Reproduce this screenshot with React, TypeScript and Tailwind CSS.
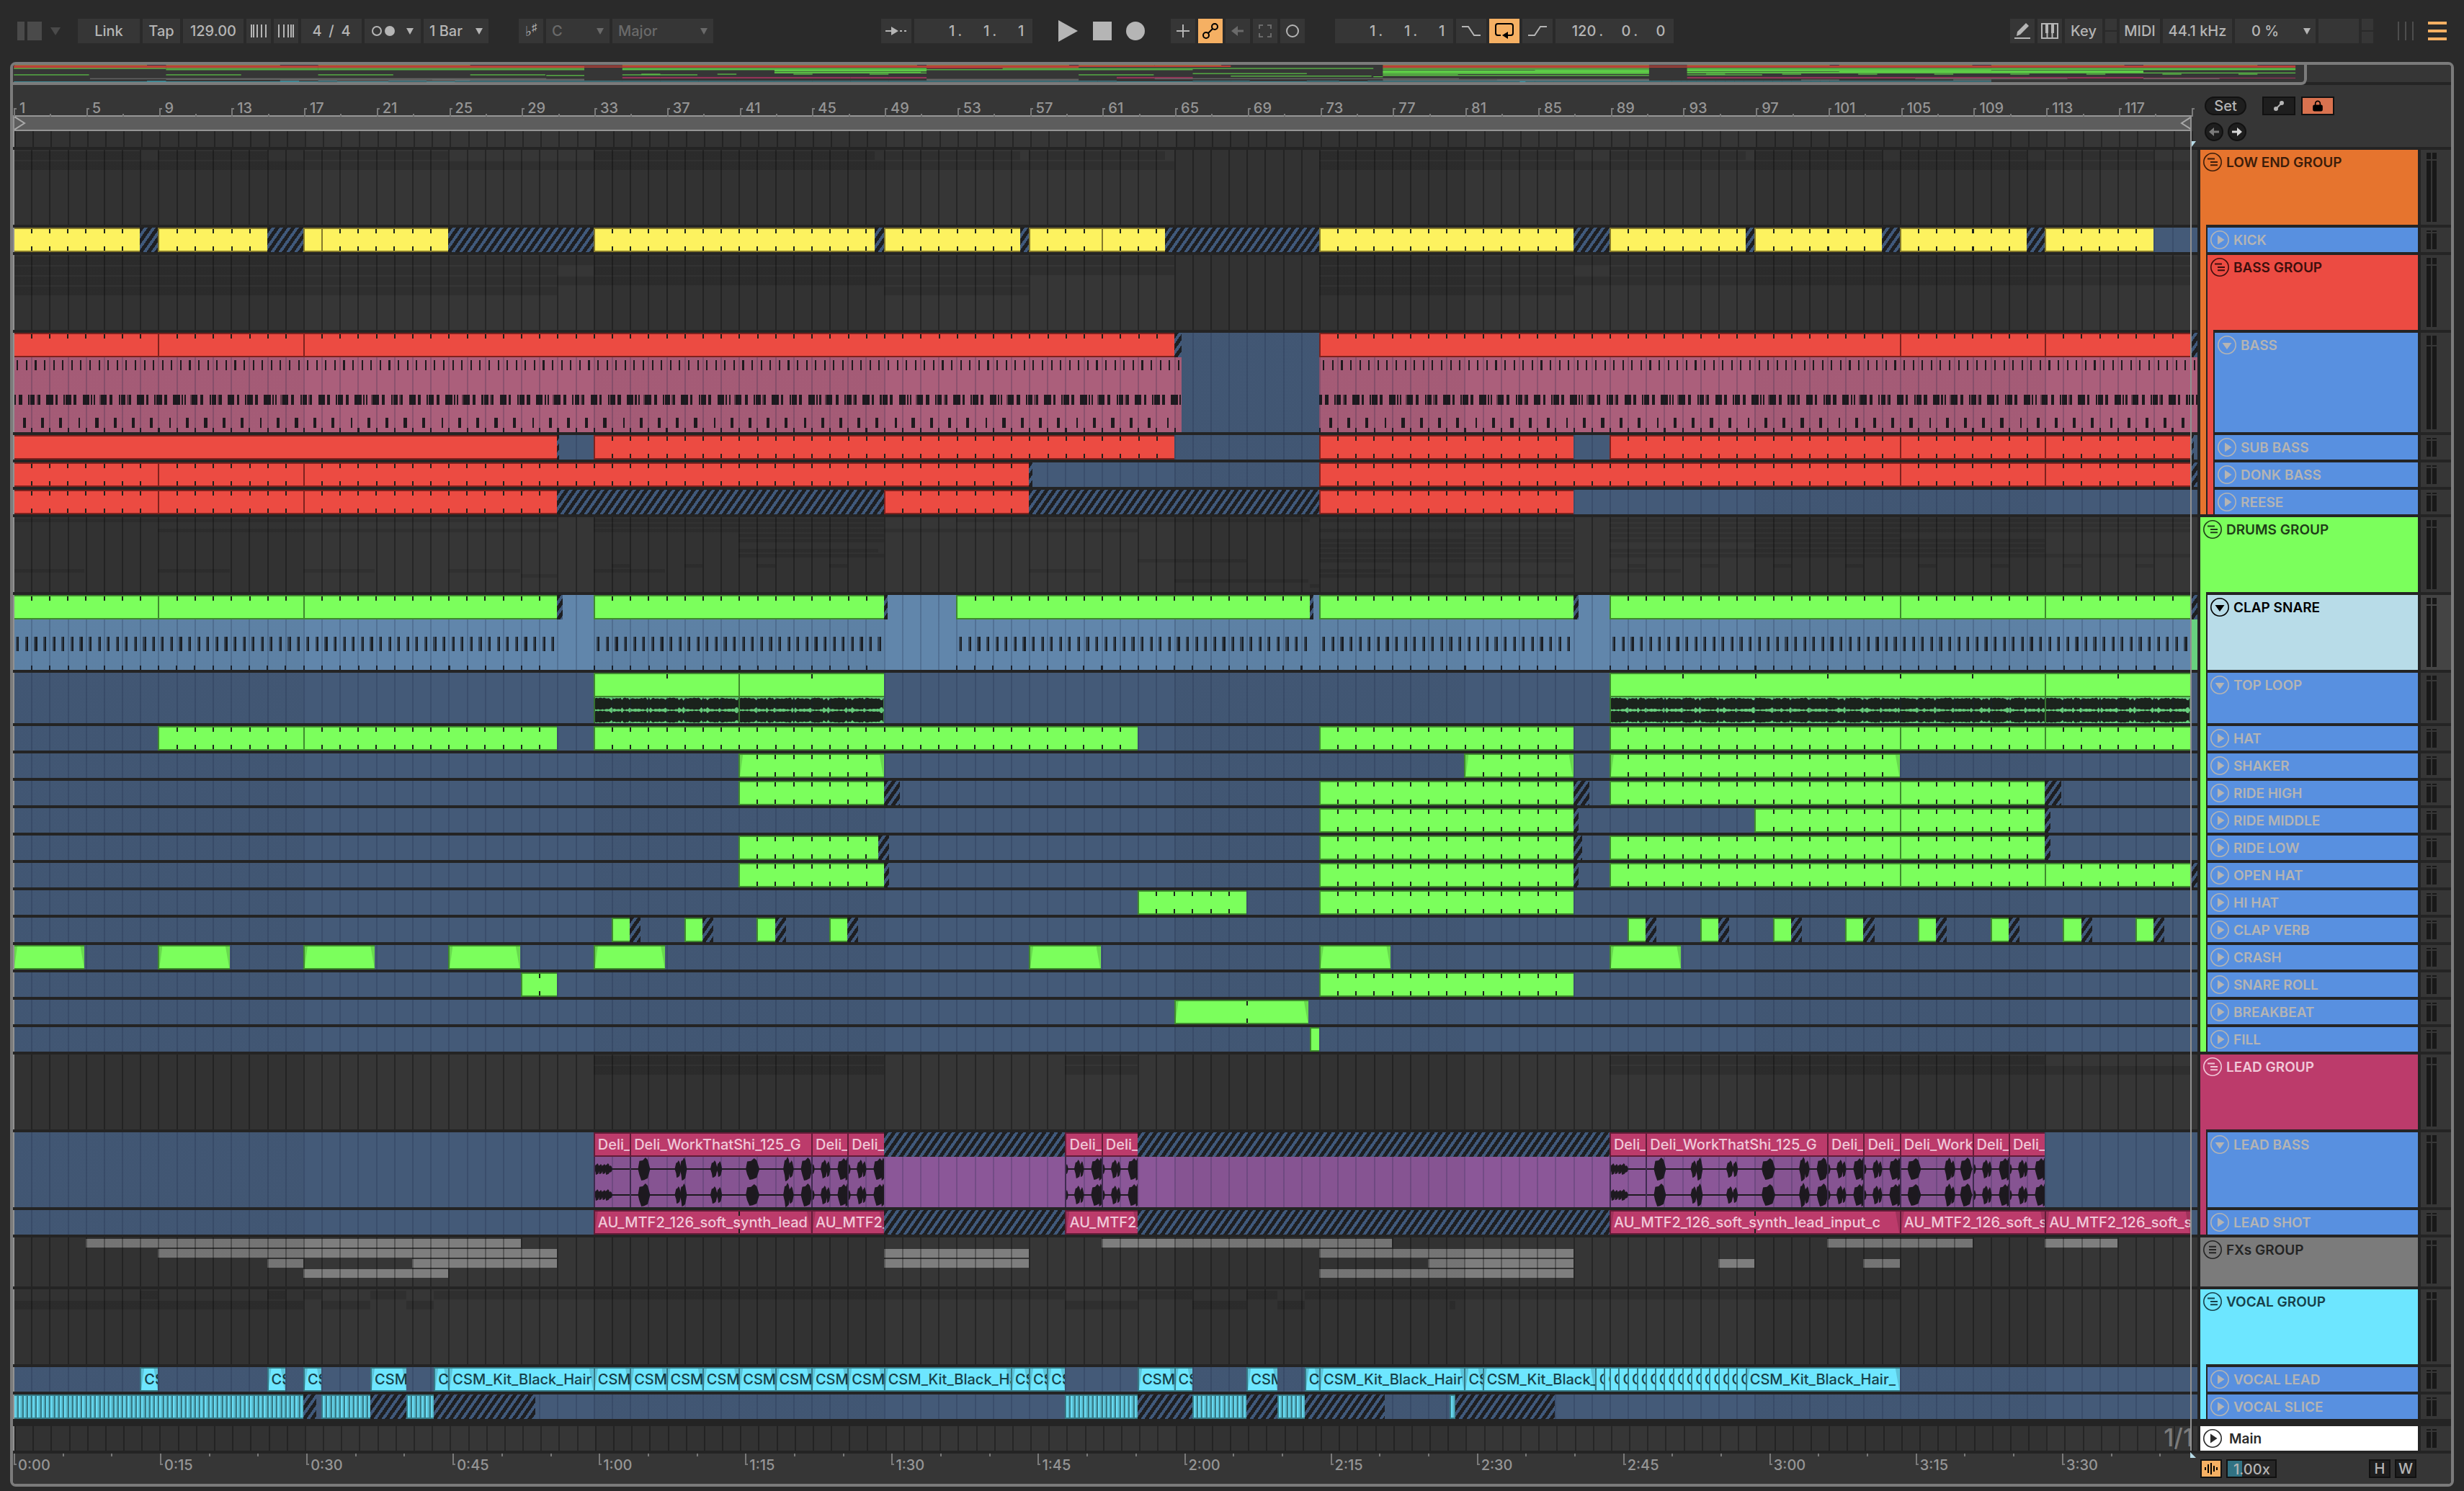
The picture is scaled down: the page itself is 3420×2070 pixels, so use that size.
import type { ReactNode } from 'react';
import { clsx } from 'clsx';
import { Lock } from 'lucide-react';

// Bars that fit into the width of the arrangement
const VISIBLE_BARS = 120.33;
const pct = (bars: number) => `${(bars / VISIBLE_BARS) * 100}%`;
const span = (start: number, end: number) => ({ left: pct(start - 1), width: pct(end - start) });

type Range = [number, number];
type Palette = 'yellow' | 'red' | 'green' | 'pink' | 'cyan';

interface Clip {
  range: Range;
  label?: string;
  tick?: number;
}

interface Track {
  name: string;
  kind: 'group' | 'fx' | 'track' | 'open';
  size: string;
  tile: string;
  strips?: string[];
  lane?: string;
  palette?: Palette;
  clips?: Clip[];
  hatch?: Range[];
  fades?: boolean;
  body?: ReactNode;
  mini?: { pitch: number; height: number; fill: string; rows: Range[][] };
  selected?: boolean;
}

const PALETTE: Record<Palette, { fill: string; edge: string; border: string; text: string; hex: string }> = {
  yellow: { fill: 'bg-[#fdf25f]', edge: 'bg-[#85792c]', border: 'border-[#85792c]', text: 'text-black', hex: '#8b7d38' },
  red: { fill: 'bg-[#ec4b42]', edge: 'bg-[#7f221e]', border: 'border-[#7f221e]', text: 'text-black', hex: '#c0413a' },
  green: { fill: 'bg-[#7bff5c]', edge: 'bg-[#3f8a2e]', border: 'border-[#3f8a2e]', text: 'text-black', hex: '#5fce48' },
  pink: { fill: 'bg-[#bc3b6b]', edge: 'bg-[#631c38]', border: 'border-[#631c38]', text: 'text-[#f0c8d8]', hex: '#98345a' },
  cyan: { fill: 'bg-[#6de6ff]', edge: 'bg-[#367985]', border: 'border-[#367985]', text: 'text-[#17414a]', hex: '#4397a6' },
};

const DARK_GRID =
  'bg-[repeating-linear-gradient(90deg,rgba(0,0,0,0.3)_0_2px,transparent_2px_0.831048%),repeating-linear-gradient(90deg,rgba(0,0,0,0.08)_0_13.29677%,transparent_13.29677%_26.59354%)]';
const SOFT_GRID =
  'bg-[repeating-linear-gradient(90deg,rgba(20,30,60,0.2)_0_2px,transparent_2px_0.831048%),repeating-linear-gradient(90deg,rgba(0,0,0,0.04)_0_13.29677%,transparent_13.29677%_26.59354%)]';
const HATCH = 'bg-[repeating-linear-gradient(125deg,#1e1f22_0_5px,#40597b_5px_9px)]';
const BLUE_LANE = 'bg-[#445a78]';

const SMALL = 'h-[38px]';
const TALL = 'h-[108px]';

const ORANGE = 'bg-[#e6742e]';
const RED = 'bg-[#ec4b42]';
const GREEN = 'bg-[#7bff5c]';
const PINK = 'bg-[#bc3b6b]';
const CYAN = 'bg-[#6de6ff]';

const each = (ranges: Range[], tick?: number, label?: string): Clip[] =>
  ranges.map((range) => ({
    range,
    tick,
    // Only as many letters as the clip has room for
    label: label?.slice(0, Math.floor((range[1] - range[0]) * 2.2 + 0.6)),
  }));

const kick: Range[] = [
  [1, 8], [9, 15], [17, 18], [18, 25], [33, 48.5], [49, 56.5], [57, 61], [61, 64.5],
  [73, 87], [89, 96.5], [97, 104], [105, 112], [113, 119],
];
const bass: Range[] = [[1, 9], [9, 17], [17, 65], [73, 105], [105, 113], [113, 121]];
const subBass: Range[] = [[33, 65], [73, 87], [89, 105], [105, 113], [113, 121]];
const donk: Range[] = [[1, 9], [9, 17], [17, 57], [73, 105], [105, 113], [113, 121]];
const reese: Range[] = [[1, 9], [9, 17], [17, 31], [49, 57], [73, 87]];
const clap: Range[] = [
  [1, 9], [9, 17], [17, 31], [33, 49], [53, 72.5], [73, 87], [89, 105], [105, 113], [113, 121],
];
const topLoop: Range[] = [[33, 41], [41, 49], [89, 113], [113, 121]];
const hat: Range[] = [[9, 17], [17, 31], [33, 63], [73, 87], [89, 105], [105, 113], [113, 121]];
const shaker: Range[] = [[41, 49], [81, 87], [89, 105]];
const rideHigh: Range[] = [[41, 49], [73, 87], [89, 105], [105, 113]];
const rideMiddle: Range[] = [[73, 87], [97, 105], [105, 113]];
const rideLow: Range[] = [[41, 48.7], [73, 87], [89, 105], [105, 113]];
const openHat: Range[] = [[41, 49], [73, 87], [89, 105], [105, 113], [113, 121]];
const hiHat: Range[] = [[63, 69], [73, 87]];
const clapVerb = [34, 38, 42, 46, 90, 94, 98, 102, 106, 110, 114, 118].map((b): Range => [b, b + 1]);
const crash = [1, 9, 17, 25, 33, 57, 73, 89].map((b): Range => [b, b + 3.95]);
const snareRoll: Range[] = [[29, 31], [73, 87]];
const breakbeat: Range[] = [[65, 72.4]];
const fill: Range[] = [[72.5, 73]];
const leadBass: Range[] = [
  [33, 35], [35, 45], [45, 47], [47, 49], [59, 61], [61, 63],
  [89, 91], [91, 101], [101, 103], [103, 105], [105, 109], [109, 111], [111, 113],
];
const leadShot: Range[] = [[33, 45], [45, 49], [59, 63], [89, 105], [105, 113], [113, 121]];
const fxRows: Range[][] = [
  [[5, 29], [61, 77], [101, 109], [113, 117]],
  [[9, 31], [49, 57], [73, 87]],
  [[15, 17], [23, 31], [49, 57], [79, 87], [95, 97], [103, 105]],
  [[17, 25], [73, 87]],
];
const vocalLead: Range[] = [
  [8, 9], [15, 16], [17, 18], [20.7, 22.7], [24.2, 25], [25, 33],
  ...[33, 35, 37, 39, 41, 43, 45, 47].map((b): Range => [b, b + 2]),
  [49, 56], [56, 57], [57, 58], [58, 59], [63, 65], [65, 66], [69, 70.7], [72.2, 73],
  [73, 81], [81, 82], [82, 88.2], [88.2, 88.7], [88.7, 89],
  ...Array.from({ length: 15 }, (_, i): Range => [89 + i / 2, 89.5 + i / 2]),
  [96.5, 105],
];
const vocalSlice: Range[] = [
  [1, 17], [18, 20.7], [22.7, 24.2], [59, 63], [66, 69], [70.7, 72.2], [80.2, 80.5],
];

// Merge touching clips, for the shaded previews in the group lanes
function merge(ranges: Range[]): Range[] {
  const out: Range[] = [];
  ranges.forEach(([start, end]) => {
    const last = out[out.length - 1];
    if (last && last[1] === start) last[1] = end;
    else out.push([start, end]);
  });
  return out;
}

// Note positions of the five bar bass pattern, 24 units to the bar
const BASS_NOTES: [number, number, number?][] = [
  [-1, 6], [7, 2, 0.5], [9, 3], [20, 9], [32, 3], [43, 2], [46, 7], [56, 4], [68, 9],
  [79, 2], [83, 2], [90, 2, 0.5], [92, 8], [104, 4], [116, 2],
];

function BassNotes({ range: [start, end] }: { range: Range }) {
  const width = (end - start) * 24;
  const halves = Array.from({ length: Math.ceil((end - start) * 2) }, (_, i) => i * 12 + 5);
  const bars = Array.from({ length: Math.ceil(end - start) }, (_, i) => i * 24);
  const cycles = Array.from({ length: Math.ceil((end - start) / 5) + 1 }, (_, i) => i * 120 - 96);
  return (
    <div className="absolute inset-y-0 bg-[#ab5f7b]" style={span(start, end)}>
      <svg
        className="h-full w-full text-[#1e1a1e]"
        viewBox={`0 0 ${width} 104`}
        preserveAspectRatio="none"
        fill="currentColor"
        shapeRendering="crispEdges"
      >
        {halves.map((x) => (
          <rect key={x} x={x} y="4" width="2" height="14" />
        ))}
        {cycles.map((c) =>
          BASS_NOTES.map(([x, w, opacity]) => (
            <rect key={`${c}-${x}`} x={c + x} y="52" width={w} height="14" opacity={opacity ?? 1} />
          ))
        )}
        {bars.map((x, i) => (
          <g key={x}>
            <rect x={x + (i % 5 === 3 ? 15 : 13)} y="84" width={i % 5 === 3 ? 2 : 4} height="14" />
            <rect x={x} y="98" width="2" height="6" />
          </g>
        ))}
      </svg>
    </div>
  );
}

function ClapNotes({ range: [start, end] }: { range: Range }) {
  const halves = Array.from({ length: Math.floor((end - start) * 2) }, (_, i) => i * 12 + 5);
  const bars = Array.from({ length: Math.ceil(end - start) }, (_, i) => i * 24);
  return (
    <div className="absolute inset-y-0" style={span(start, end)}>
      <svg
        className="h-full w-full text-[#1b2026]"
        viewBox={`0 0 ${(end - start) * 24} 70`}
        preserveAspectRatio="none"
        fill="currentColor"
        shapeRendering="crispEdges"
      >
        {halves.map((x) => (
          <g key={x}>
            <rect x={x - 1} y="24" width="2" height="20" opacity="0.6" />
            <rect x={x + 1} y="24" width="2" height="20" />
          </g>
        ))}
        {bars.map((x) => (
          <rect key={x} x={x} y="64" width="2" height="6" />
        ))}
      </svg>
    </div>
  );
}

function LoopWave({ range: [start, end] }: { range: Range }) {
  const steps = Math.round((end - start) * 12);
  const channel = (mid: number) => {
    const top: string[] = [];
    const bottom: string[] = [];
    for (let i = 0; i <= steps; i++) {
      const dip = i % 12 === 11 || i % 19 === 18 ? 2.5 : 0;
      const h = 7.6 + Math.sin(i * 2.3) * 0.5 + Math.sin(i * 0.4) * 0.5 - dip;
      top.push(`${i * 2},${mid - h}`);
      bottom.unshift(`${i * 2},${mid + h}`);
    }
    return [...top, ...bottom].join(' ');
  };
  return (
    <div className="absolute inset-y-0 border-l-2 border-[#3f8a2e] bg-[#68d17e]" style={span(start, end)}>
      <svg
        className="h-full w-full"
        viewBox={`0 0 ${steps * 2} 36`}
        preserveAspectRatio="none"
        fill="#1b231d"
      >
        <polygon points={channel(9)} />
        <polygon points={channel(27)} />
      </svg>
    </div>
  );
}

// Vocal hits as [bar offset, width, height]
type Hit = [number, number, number];
const LONG_HITS: Hit[] = [[0.72, 15, 16], [2.6, 7, 12], [2.9, 8, 16], [4.6, 8, 12], [4.9, 6, 11], [6.75, 17, 15], [8.65, 8, 17], [8.88, 6, 12], [9.75, 14, 16]];
const SHORT_HITS: Hit[] = [[0.02, 3, 7], [0.65, 8, 13], [0.88, 5, 11], [1.72, 13, 15], [1.95, 6, 16]];
const MID_HITS: Hit[] = [[0.73, 17, 15], [2.65, 9, 16], [2.88, 6, 12], [3.65, 15, 16]];
const INTRO_HITS: Hit[] = [[0.1, 6, 8], [0.3, 6, 7], [0.5, 6, 7], [0.7, 7, 8], [0.85, 6, 5]];

function HitWave({ range: [start, end] }: { range: Range }) {
  const length = end - start;
  const intro = start === 33 || start === 89;
  const hits = intro ? INTRO_HITS : length > 8 ? LONG_HITS : length > 3 ? MID_HITS : SHORT_HITS;
  return (
    <div className="absolute inset-y-0 border-l-2 border-[#4b2f56]" style={span(start, end)}>
      <svg
        className="h-full w-full"
        viewBox={`0 0 ${length * 25} 70`}
        preserveAspectRatio="none"
        fill="#1e1a20"
      >
        {[17, 53].map((mid) => (
          <g key={mid}>
            <rect x="0" y={mid - 1} width={length * 25} height="2" />
            {hits.map(([at, w, h]) => {
              const x = at * 25;
              return (
                <polygon
                  key={at}
                  points={`${x - w / 2 - 1},${mid} ${x - w / 2 + 1},${mid - h * 0.7} ${x - w / 8},${mid - h * 0.75} ${x + w / 8},${mid - h} ${x + w / 3},${mid - h * 0.8} ${x + w / 2 + 1},${mid} ${x + w / 3},${mid + h * 0.8} ${x},${mid + h * 0.95} ${x - w / 4},${mid + h} ${x - w / 2 + 1},${mid + h * 0.5}`}
                />
              );
            })}
          </g>
        ))}
      </svg>
    </div>
  );
}

const drum = (name: string, ranges: Range[], extra: Partial<Track> = {}, tick?: number): Track => ({
  name,
  kind: 'track',
  size: SMALL,
  tile: 'bg-[#5890e0] text-[#b4b4b4]',
  strips: [GREEN],
  lane: BLUE_LANE,
  palette: 'green',
  clips: each(ranges, tick),
  ...extra,
});

const TRACKS: Track[] = [
  {
    name: 'LOW END GROUP', kind: 'group', size: TALL, tile: `${ORANGE} text-[#3c1d0a]`,
    mini: { pitch: 14, height: 12, fill: 'bg-black/12', rows: [merge(kick.map((r) => [...r] as Range)), [[1, 65], [73, 121]]] },
  },
  {
    ...drum('KICK', kick, {}, 1), strips: [ORANGE], palette: 'yellow',
    hatch: [[8, 9], [15, 17], [25, 33], [48.5, 49], [56.5, 57], [64.5, 73], [87, 89], [96.5, 97], [104, 105], [112, 113]],
  },
  {
    name: 'BASS GROUP', kind: 'group', size: TALL, tile: `${RED} text-[#3d0f0d]`, strips: [ORANGE],
    mini: { pitch: 14, height: 12, fill: 'bg-black/12', rows: [[[1, 65], [73, 121]], [[1, 31], [33, 65], [73, 87], [89, 121]], [[1, 57], [73, 121]], [[1, 31], [49, 57], [73, 87]]] },
  },
  {
    ...drum('BASS', bass, {}, 1), kind: 'open', size: 'h-[142px]', strips: [ORANGE, RED], palette: 'red',
    hatch: [[65, 65.4], [121, 122]],
    body: (
      <>
        <BassNotes range={[1, 65.4]} />
        <BassNotes range={[73, 122]} />
      </>
    ),
  },
  {
    ...drum('SUB BASS', []), strips: [ORANGE, RED], palette: 'red',
    clips: [{ range: [1, 31] }, ...each(subBass, 1)], hatch: [[31, 31.1], [121, 121.2]],
  },
  { ...drum('DONK BASS', donk, {}, 1), strips: [ORANGE, RED], palette: 'red', hatch: [[57, 57.2], [121, 122]] },
  { ...drum('REESE', reese, {}, 1), strips: [ORANGE, RED], palette: 'red', hatch: [[31, 49], [57, 73]] },
  {
    name: 'DRUMS GROUP', kind: 'group', size: TALL, tile: `${GREEN} text-[#1f3d18]`,
    mini: {
      pitch: 7, height: 5, fill: 'bg-black/10',
      rows: [clap, topLoop, hat, shaker, rideHigh, rideMiddle, rideLow, openHat, hiHat, clapVerb, crash, snareRoll, breakbeat, fill],
    },
  },
  {
    ...drum('CLAP SNARE', clap, {}, 1), kind: 'open', size: TALL, tile: 'bg-[#b8dce8] text-black',
    lane: 'bg-[#6186ab]', selected: true,
    hatch: [[31, 31.3], [49, 49.2], [72.5, 72.7], [87, 87.3], [121, 122]],
    body: (
      <>
        {[[1, 9], [9, 17], [17, 31], [33, 49], [53, 72.5], [73, 87], [89, 121]].map(([a, b]) => (
          <ClapNotes key={a} range={[a, b]} />
        ))}
        <div className="absolute inset-y-0 bg-[#68d17e]" style={span(121, 122)} />
      </>
    ),
  },
  {
    ...drum('TOP LOOP', topLoop, {}, 4), kind: 'open', size: 'h-[74px]',
    body: topLoop.map((range) => <LoopWave key={range[0]} range={range} />),
  },
  drum('HAT', hat, {}, 1),
  drum('SHAKER', shaker, { fades: true }, 1),
  drum('RIDE HIGH', rideHigh, { hatch: [[49, 49.9], [87, 87.9], [113, 113.9]] }, 1),
  drum('RIDE MIDDLE', rideMiddle, { hatch: [[87, 87.3], [113, 113.3]] }, 1),
  drum('RIDE LOW', rideLow, { hatch: [[48.7, 49.3], [87, 87.5], [113, 113.3]] }, 1),
  drum('OPEN HAT', openHat, { hatch: [[49, 49.3], [87, 87.3], [121, 122]] }, 1),
  drum('HI HAT', hiHat, {}, 1),
  drum('CLAP VERB', clapVerb, { hatch: clapVerb.map(([, b]): Range => [b, b + 0.6]) }),
  drum('CRASH', crash, { fades: true }),
  drum('SNARE ROLL', snareRoll, {}, 1),
  drum('BREAKBEAT', breakbeat, { fades: true }, 4),
  drum('FILL', fill),
  {
    name: 'LEAD GROUP', kind: 'group', size: TALL, tile: `${PINK} text-[#f0c8d8]`,
    mini: { pitch: 14, height: 12, fill: 'bg-black/12', rows: [[[33, 49], [59, 63], [89, 113]], [[33, 49], [59, 63], [89, 121]]] },
  },
  {
    ...drum('LEAD BASS', []), kind: 'open', size: TALL, strips: [PINK], palette: 'pink',
    clips: each(leadBass, undefined, 'Deli_WorkThatShi_125_G'), hatch: [[49, 59], [63, 89]],
    body: (
      <>
        <div className="absolute inset-y-0 bg-[#8b5798]" style={span(33, 113)} />
        {leadBass.map((range) => (
          <HitWave key={range[0]} range={range} />
        ))}
      </>
    ),
  },
  {
    ...drum('LEAD SHOT', []), strips: [PINK], palette: 'pink', fades: true,
    clips: each(leadShot, 8, 'AU_MTF2_126_soft_synth_lead_input_c'), hatch: [[49, 59], [63, 89]],
  },
  {
    name: 'FXs GROUP', kind: 'fx', size: 'h-[72px]', tile: 'bg-[#7b7b7b] text-[#242424]',
    mini: { pitch: 14, height: 12, fill: 'bg-[#7e7e7e]', rows: fxRows },
  },
  {
    name: 'VOCAL GROUP', kind: 'group', size: TALL, tile: `${CYAN} text-[#17414a]`,
    mini: { pitch: 14, height: 12, fill: 'bg-black/12', rows: [merge(vocalLead.map((r) => [...r] as Range)), vocalSlice] },
  },
  {
    ...drum('VOCAL LEAD', []), strips: [CYAN], palette: 'cyan', fades: true,
    clips: each(vocalLead, undefined, 'CSM_Kit_Black_Hair_'),
  },
  {
    ...drum('VOCAL SLICE', []), strips: [CYAN], palette: 'cyan', clips: each(vocalSlice),
    hatch: [[17, 17.7], [20.7, 22.7], [24.2, 29.8], [63, 66], [69, 70.7], [72.2, 76.6], [80.5, 86]],
  },
];

function Triangle({ className }: { className?: string }) {
  return (
    <svg className={clsx('pointer-events-none h-[10px] w-[10px]', className)} viewBox="0 0 10 10" fill="currentColor">
      <path d="M0 1h10L5 10z" />
    </svg>
  );
}

function TrackIcon({ kind }: { kind: Track['kind'] }) {
  return (
    <svg className="h-[26px] w-[26px] shrink-0" viewBox="0 0 26 26" fill="none" stroke="currentColor">
      <circle cx="13" cy="13" r="12.2" strokeWidth="1.6" />
      {kind === 'group' && <path d="M6 8.5h10M10 13h10M10 17.2h10" strokeWidth="2" />}
      {kind === 'fx' && <path d="M8 8.8h10M8 13h10M8 17.2h10" strokeWidth="2" />}
      {kind === 'track' && <path d="M10 6.5v13l9.5-6.5z" fill="currentColor" stroke="none" />}
      {kind === 'open' && <path d="M6.5 10h13L13 19z" fill="currentColor" stroke="none" />}
    </svg>
  );
}

function Meter({ selected }: { selected?: boolean }) {
  return (
    <div className={clsx('ml-1 flex w-[42px] gap-0.5 py-1 pl-2', selected ? 'bg-[#444444]' : 'bg-[#363636]')}>
      {[0, 1].map((side) => (
        <div key={side} className="grid w-1.5 grid-rows-[1fr_9fr] gap-0.5">
          <div className="bg-[#181818]" />
          <div className="bg-[#181818]" />
        </div>
      ))}
    </div>
  );
}

function Ticks({ length, every, className }: { length: number; every: number; className: string }) {
  if (length <= every) return null;
  const step = (every / (length - every)) * 100;
  return (
    <div
      className={clsx('absolute right-0 h-1.5', className)}
      style={{
        left: `${(every / length) * 100}%`,
        backgroundImage: `repeating-linear-gradient(90deg, #1c221c 0 2px, transparent 2px ${step}%)`,
      }}
    />
  );
}

function ClipView({ clip, track }: { clip: Clip; track: Track }) {
  const color = PALETTE[track.palette ?? 'green'];
  const length = clip.range[1] - clip.range[0];
  const sliced = track.name === 'VOCAL SLICE';
  return (
    <div
      className={clsx('absolute inset-y-0 overflow-hidden border-y-2', color.fill, color.border)}
      style={span(...clip.range)}
    >
      {sliced && (
        <div
          className="absolute inset-0"
          style={{
            backgroundImage: `repeating-linear-gradient(90deg, #367985 0 2px, #6de6ff 2px, #4faabb ${25 / length}%)`,
          }}
        />
      )}
      {track.fades && length > 0.6 && (
        <>
          <div className="absolute inset-y-0 left-0 w-1.5 bg-black/15 [clip-path:polygon(0_0,100%_0,30%_100%,0_100%)]" />
          <div className="absolute inset-y-0 right-0 w-1.5 bg-black/15 [clip-path:polygon(0_0,100%_0,100%_100%,90%_100%)]" />
        </>
      )}
      {clip.tick && <Ticks length={length} every={clip.tick} className="top-0" />}
      {clip.tick && track.kind === 'track' && <Ticks length={length} every={clip.tick} className="bottom-0" />}
      {clip.label && (
        <span className={clsx('block pl-1.5 text-xl leading-[30px] font-medium whitespace-nowrap', color.text)}>
          {clip.label}
        </span>
      )}
      {clip.range[0] > 1 && <div className={clsx('absolute inset-y-0 left-0 w-0.5', color.edge)} />}
    </div>
  );
}

function Lane({ track }: { track: Track }) {
  const { mini } = track;
  return (
    <div className={clsx('relative flex-1 overflow-hidden border-l-2 border-[#919191]', track.lane ?? 'bg-[#363636]')}>
      <div className="absolute inset-y-0 right-0.5 -left-0.5">
        {track.body && <div className="absolute inset-x-0 top-[34px] bottom-0">{track.body}</div>}
        {mini?.rows.map((row, i) =>
          row.map(([start, end]) => (
            <div
              key={`${i}-${start}`}
              className={clsx('absolute', mini.fill)}
              style={{ ...span(start, end), top: 2 + i * mini.pitch, height: mini.height }}
            />
          ))
        )}
        <div className={clsx('absolute inset-0', track.lane ? SOFT_GRID : DARK_GRID)} />
        <div className="absolute inset-x-0 top-0 h-[34px]">
          {track.hatch?.map(([start, end]) => (
            <div key={start} className={clsx('absolute inset-y-0', HATCH)} style={span(start, end)} />
          ))}
          {track.clips?.map((clip) => (
            <ClipView key={clip.range[0]} clip={clip} track={track} />
          ))}
        </div>
      </div>
    </div>
  );
}

function TrackRow({ track }: { track: Track }) {
  return (
    <div className={clsx('flex', track.size)}>
      <div className="flex flex-1 pt-1">
        <Lane track={track} />
      </div>
      <div className="ml-1 flex w-[302px]">
        {track.strips?.map((strip) => (
          <div key={strip} className={clsx('mr-0.5 w-2', strip)} />
        ))}
        <div className="flex flex-1 pt-1">
          <div className={clsx('flex flex-1 items-start gap-1.5 p-1', track.tile)}>
            <button type="button" aria-label={`Fold ${track.name}`}>
              <TrackIcon kind={track.kind} />
            </button>
            <span className="text-[19px] leading-7 font-semibold whitespace-nowrap">{track.name}</span>
          </div>
        </div>
      </div>
      <div className="flex pt-1">
        <Meter selected={track.selected} />
      </div>
    </div>
  );
}

function Cell({ className, label, children }: { className?: string; label?: string; children?: ReactNode }) {
  return (
    <button
      type="button"
      aria-label={label}
      className={clsx('flex h-[34px] items-center justify-center', className ?? 'w-[34px] bg-[#363636]')}
    >
      {children}
    </button>
  );
}

function Dropdown({ value, label, className }: { value: string; label: string; className: string }) {
  return (
    <div className={clsx('relative h-[34px] bg-[#363636]', className)}>
      <select aria-label={label} defaultValue={value} className="h-full w-full appearance-none pl-2 outline-none">
        <option>{value}</option>
      </select>
      <Triangle className="absolute top-3 right-2" />
    </div>
  );
}

function Position({ label, values }: { label: string; values: string[] }) {
  return (
    <div role="group" aria-label={label} className="flex h-[34px] w-[164px] items-center justify-end bg-[#363636] pr-3">
      {values.map((value, i) => (
        <div key={i} className="flex">
          <input aria-label={`${label} ${i + 1}`} defaultValue={value} className="w-[38px] text-right outline-none" />
          {i < 2 && <span className="w-2.5 text-right">.</span>}
        </div>
      ))}
    </div>
  );
}

function Split() {
  return (
    <div className="flex w-4 flex-col gap-0.5">
      <div className="flex-1 bg-[#363636]" />
      <div className="flex-1 bg-[#363636]" />
    </div>
  );
}

function Toolbar() {
  return (
    <header className="flex px-6 py-[26px] text-xl leading-7 font-medium text-[#b5b5b5]">
      <div className="flex gap-1">
        <button type="button" aria-label="Browser" className="mr-5 flex items-center gap-3 text-[#4a4a4a]">
          <svg className="h-[26px] w-[34px]" viewBox="0 0 34 26" fill="currentColor">
            <path d="M0 0h10v26H0zM14 0h20v26H14z" />
          </svg>
          <svg className="h-3 w-[14px]" viewBox="0 0 14 12" fill="currentColor">
            <path d="M0 1h14L7 12z" />
          </svg>
        </button>
        <Cell className="w-[86px] bg-[#363636]">Link</Cell>
        <Cell className="w-[52px] bg-[#363636]">Tap</Cell>
        <input aria-label="Tempo" defaultValue="129.00" className="h-[34px] w-[84px] bg-[#363636] text-center outline-none" />
        <Cell label="Nudge down">
          <svg className="h-[18px] w-6" viewBox="0 0 24 18" stroke="currentColor" strokeWidth="2">
            <path d="M2 0v18M5 0v18M10 0v18M16 0v18M22 0v18" />
          </svg>
        </Cell>
        <Cell label="Nudge up">
          <svg className="h-[18px] w-6" viewBox="0 0 24 18" stroke="currentColor" strokeWidth="2">
            <path d="M2 0v18M9 0v18M15 0v18M19 0v18M22 0v18" />
          </svg>
        </Cell>
        <div className="flex h-[34px] w-[84px] items-center justify-center gap-1 bg-[#363636]">
          <input aria-label="Beats" defaultValue="4" className="w-4 text-center outline-none" />
          <span className="w-4 text-center">/</span>
          <input aria-label="Beat unit" defaultValue="4" className="w-4 text-center outline-none" />
        </div>
        <Cell label="Metronome" className="w-[78px] gap-4 bg-[#363636]">
          <svg className="h-[14px] w-8" viewBox="0 0 32 14" fill="none" stroke="currentColor" strokeWidth="2">
            <circle cx="7" cy="7" r="6" />
            <circle cx="25" cy="7" r="6" fill="currentColor" />
          </svg>
          <Triangle />
        </Cell>
        <Dropdown label="Quantization" value="1 Bar" className="w-[90px]" />
        <Cell label="Scale" className="ml-[38px] w-[34px] bg-[#363636]">
          <span className="self-end text-[19px] leading-8">♭</span>
          <span className="self-start text-[15px] leading-6">♯</span>
        </Cell>
        <Dropdown label="Root note" value="C" className="w-[88px] text-[#6a6a6a]" />
        <Dropdown label="Scale name" value="Major" className="w-[140px] text-[#6a6a6a]" />
      </div>
      <div className="flex-1" />
      <div className="flex gap-1">
        <Cell label="Follow" className="w-[42px] bg-[#363636]">
          <svg className="h-[14px] w-[30px]" viewBox="0 0 30 14" fill="currentColor">
            <path d="M0 6h8V1l10 6-10 6V8H0zM20 6h3v2h-3zM26 6h3v2h-3z" />
          </svg>
        </Cell>
        <Position label="Song position" values={['1', '1', '1']} />
        <div className="flex items-center gap-5 px-8">
          <button type="button" aria-label="Play">
            <svg className="h-[30px] w-7" viewBox="0 0 28 30" fill="currentColor">
              <path d="M0 0v30l27-15z" />
            </svg>
          </button>
          <button type="button" aria-label="Stop" className="h-[26px] w-[26px] bg-[#b5b5b5]" />
          <button type="button" aria-label="Record" className="h-[26px] w-[26px] rounded-full bg-[#b5b5b5]" />
        </div>
        <Cell label="Overdub">
          <svg className="h-[18px] w-[18px]" viewBox="0 0 18 18" stroke="currentColor" strokeWidth="2">
            <path d="M9 0v18M0 9h18" />
          </svg>
        </Cell>
        <Cell label="Automation arm" className="w-[34px] bg-[#f5b063] text-black">
          <svg className="h-[22px] w-[22px]" viewBox="0 0 22 22" fill="none" stroke="currentColor" strokeWidth="2">
            <circle cx="5" cy="17" r="4" />
            <circle cx="17" cy="5" r="4" />
            <path d="M8 14l6-6" />
          </svg>
        </Cell>
        <Cell label="Re-enable automation" className="w-[34px] bg-[#363636] text-[#6a6a6a]">
          <svg className="h-4 w-[18px]" viewBox="0 0 18 16" fill="currentColor">
            <path d="M0 8l9-7v5.500h8v3H9V15z" />
          </svg>
        </Cell>
        <Cell label="Capture" className="w-[34px] bg-[#363636] text-[#6a6a6a]">
          <svg className="h-[18px] w-[18px]" viewBox="0 0 18 18" fill="none" stroke="currentColor" strokeWidth="2">
            <path d="M1 6V1h5M12 1h5v5M17 12v5h-5M6 17H1v-5" />
          </svg>
        </Cell>
        <Cell label="Session record">
          <svg className="h-[18px] w-[18px]" viewBox="0 0 18 18" fill="none" stroke="currentColor" strokeWidth="2">
            <circle cx="9" cy="9" r="8" />
          </svg>
        </Cell>
        <div className="w-[34px]" />
        <Position label="Loop start" values={['1', '1', '1']} />
        <Cell label="Punch in" className="w-[42px] bg-[#363636]">
          <svg className="h-4 w-[26px]" viewBox="0 0 26 16" fill="none" stroke="currentColor" strokeWidth="2">
            <path d="M0 2h9l8 12h9" />
          </svg>
        </Cell>
        <Cell label="Loop" className="w-[42px] bg-[#f5b063] text-black">
          <svg className="h-[22px] w-[26px]" viewBox="0 0 26 22" fill="none" stroke="currentColor" strokeWidth="2">
            <path d="M8 17H4a3 3 0 01-3-3V4a3 3 0 013-3h18a3 3 0 013 3v10a3 3 0 01-3 3h-4" />
            <path d="M10 17l8-5v10z" fill="currentColor" stroke="none" />
          </svg>
        </Cell>
        <Cell label="Punch out" className="w-[42px] bg-[#363636]">
          <svg className="h-4 w-[26px]" viewBox="0 0 26 16" fill="none" stroke="currentColor" strokeWidth="2">
            <path d="M0 14h9l8-12h9" />
          </svg>
        </Cell>
        <Position label="Loop length" values={['120', '0', '0']} />
      </div>
      <div className="flex-2" />
      <div className="flex gap-1">
        <Cell label="Draw mode">
          <svg className="h-6 w-6" viewBox="0 0 24 24" fill="currentColor">
            <path d="M4 19l1-6L17 1l4 4L9 17zM1 21h22v2H1z" />
          </svg>
        </Cell>
        <Cell label="Computer keyboard">
          <svg className="h-[22px] w-6" viewBox="0 0 24 22" fill="none" stroke="currentColor" strokeWidth="2">
            <path d="M1 1h22v20H1zM8.500 13v8M15.500 13v8" />
            <path d="M8 2v12M16 2v12" strokeWidth="4" />
          </svg>
        </Cell>
        <Cell className="w-[52px] bg-[#363636]">Key</Cell>
        <Split />
        <Cell className="w-[56px] bg-[#363636]">MIDI</Cell>
        <Cell className="w-[96px] bg-[#363636]">44.1 kHz</Cell>
        <Cell label="CPU load" className="w-[112px] gap-[34px] bg-[#363636] pl-4">
          <span>0 %</span>
          <Triangle />
        </Cell>
        <div className="w-[56px] bg-[#363636]" />
        <Split />
        <button type="button" aria-label="Mixer" className="ml-[30px] flex items-center gap-2 py-1">
          {[0, 1, 2].map((i) => (
            <span key={i} className="h-full w-0.5 bg-[#4d4d4d]" />
          ))}
        </button>
        <button type="button" aria-label="Arrangement" className="ml-4 flex w-[26px] flex-col justify-between py-1">
          {[0, 1, 2].map((i) => (
            <span key={i} className="h-1 w-full bg-[#f5b063]" />
          ))}
        </button>
      </div>
    </header>
  );
}

function Overview() {
  const rows: { color: string; ranges: Range[] }[] = [];
  TRACKS.forEach((track) => {
    if (track.kind === 'fx') fxRows.forEach((ranges) => rows.push({ color: '#6e6e6e', ranges }));
    else if (track.clips) {
      rows.push({ color: PALETTE[track.palette ?? 'green'].hex, ranges: track.clips.map((c) => c.range) });
    }
  });
  return (
    <div className="flex h-7">
      <div className="flex-1 rounded-br-lg border-r-4 border-b-4 border-[#7b7b7b] bg-[#363636]">
        <svg className="h-6 w-full" viewBox={`0 0 120.5 ${rows.length}`} preserveAspectRatio="none">
          {rows.map(({ color, ranges }, y) =>
            ranges.map(([start, end]) => (
              <rect key={`${y}-${start}`} x={start - 0.95} y={y} width={end - start} height="1.3" fill={color} />
            ))
          )}
        </svg>
      </div>
      <div className="w-[200px] border-b-4 border-[#242424] bg-[#363636]" />
    </div>
  );
}

function BarRuler() {
  return (
    <div className="grid h-[42px] grid-cols-[repeat(30,4fr)_0.33fr] bg-[#363636] text-xl font-medium text-[#959595]">
      {Array.from({ length: 31 }, (_, i) => (
        <div key={i} className="relative pt-5 pl-2 leading-6">
          <span className="absolute bottom-0 left-0 h-3 w-1 border-t-2 border-l-2 border-[#7a7a7a]" />
          {i < 30 && <span className="absolute bottom-0 left-1/2 h-1 w-0.5 bg-[#7a7a7a]" />}
          {i < 30 && i * 4 + 1}
        </div>
      ))}
    </div>
  );
}

function TimeRuler() {
  return (
    <div className="flex flex-1 overflow-hidden pl-px text-xl font-medium text-[#959595]">
      {Array.from({ length: 15 }, (_, i) => (
        <div key={i} className="relative w-[6.7%] shrink-0 pt-1 pl-1.5 leading-6">
          <span className="absolute top-0 left-0 h-4 w-1 border-b-2 border-l-2 border-[#7a7a7a]" />
          <span className="absolute top-0 left-1/3 h-1 w-0.5 bg-[#7a7a7a]" />
          <span className="absolute top-0 left-2/3 h-1 w-0.5 bg-[#7a7a7a]" />
          {Math.floor(i / 4)}:{String((i % 4) * 15).padStart(2, '0')}
        </div>
      ))}
    </div>
  );
}

function LocatorControls() {
  return (
    <div className="w-[352px] bg-[#363636] px-2.5 pt-4 text-xl font-medium text-[#b5b5b5]">
      <div className="flex gap-2">
        <button type="button" className="mr-3.5 flex h-[26px] w-[58px] items-center justify-center rounded-full border-2 border-[#111111] bg-[#1e1e1e]">
          Set
        </button>
        <button type="button" aria-label="Automation mode" className="flex h-[26px] w-[46px] items-center justify-center border-2 border-[#111111] bg-[#1e1e1e]">
          <svg className="h-[14px] w-[14px]" viewBox="0 0 14 14" fill="currentColor" stroke="currentColor" strokeWidth="2">
            <circle cx="3" cy="11" r="2" />
            <circle cx="11" cy="3" r="2" />
            <path d="M3 11l8-8" />
          </svg>
        </button>
        <button type="button" aria-label="Lock envelopes" className="flex h-[26px] w-[46px] items-center justify-center border-2 border-[#111111] bg-[#d9724f] text-black">
          <Lock className="h-4 w-4 [&_rect]:fill-black" strokeWidth={2.5} />
        </button>
      </div>
      <div className="flex gap-1.5 pt-2.5">
        <button type="button" aria-label="Previous locator" className="flex h-[26px] w-[26px] items-center justify-center rounded-full border-2 border-[#111111] bg-[#1e1e1e] text-[#7a7a7a]">
          <svg className="h-3 w-[14px]" viewBox="0 0 14 12" fill="currentColor">
            <path d="M0 6l7-6v4.500h7v3H7V12z" />
          </svg>
        </button>
        <button type="button" aria-label="Next locator" className="flex h-[26px] w-[26px] items-center justify-center rounded-full border-2 border-[#111111] bg-[#1e1e1e] text-[#d8d8d8]">
          <svg className="h-3 w-[14px]" viewBox="0 0 14 12" fill="currentColor">
            <path d="M14 6L7 0v4.500H0v3h7V12z" />
          </svg>
        </button>
      </div>
    </div>
  );
}

function LoopBrace() {
  return (
    <div className="flex h-[22px] bg-[#363636]">
      <div
        className="flex justify-between border-y-2 border-[#969696] bg-[#5d5d5d] text-[#a8a8a8]"
        style={{ width: pct(120) }}
      >
        <svg className="h-[18px] w-4" viewBox="0 0 16 18" fill="none" stroke="currentColor" strokeWidth="2">
          <path d="M0 0l14 9L0 18" />
        </svg>
        <svg className="h-[18px] w-4" viewBox="0 0 16 18" fill="none" stroke="currentColor" strokeWidth="2">
          <path d="M16 0L2 9l14 9" />
        </svg>
      </div>
    </div>
  );
}

function Footer() {
  return (
    <div className="flex h-[42px] bg-[#363636]">
      <TimeRuler />
      <div className="flex w-[352px] gap-1.5 pt-2 pl-1 text-xl leading-6 font-medium text-[#b5b5b5]">
        <button type="button" aria-label="Waveform zoom" className="flex h-[26px] w-[30px] items-center justify-center border-2 border-[#111111] bg-[#f5b063] text-black">
          <svg className="h-4 w-5" viewBox="0 0 20 16" stroke="currentColor" strokeWidth="2">
            <path d="M2 6v4M6 2v12M10 0v16M14 4v8M18 6v4" />
          </svg>
        </button>
        <div className="relative h-[26px] w-[70px] border-2 border-[#111111] bg-[#262626]">
          <div className="absolute inset-y-0 left-0 w-5 bg-[#317283]" />
          <input aria-label="Zoom" defaultValue="1.00x" className="relative h-full w-full pl-2 outline-none" />
        </div>
        <div className="flex-1" />
        <button type="button" className="flex h-[26px] w-[30px] items-center justify-center border-2 border-[#111111] bg-[#1e1e1e]">H</button>
        <button type="button" className="mr-12 flex h-[26px] w-[30px] items-center justify-center border-2 border-[#111111] bg-[#1e1e1e]">W</button>
      </div>
    </div>
  );
}

export default function App() {
  return (
    <div className="min-h-screen bg-[#2a2a2a] font-['Inter','Liberation_Sans',sans-serif]">
      <Toolbar />
      <main className="mx-3.5 overflow-hidden rounded-lg border-4 border-[#7b7b7b] bg-[#242424]">
        <Overview />
        <div className="relative">
          <div className="flex">
            <div className="flex-1">
              <div className="border-l border-[#363636]">
                <BarRuler />
              </div>
              <div className="border-l-2 border-[#919191]">
                <LoopBrace />
                <div className={clsx('h-[22px] bg-[#363636]', DARK_GRID)} />
              </div>
            </div>
            <LocatorControls />
          </div>
          {TRACKS.map((track) => (
            <TrackRow key={track.name} track={track} />
          ))}
          <div className="mt-2.5 mb-1 flex h-[34px]">
            <div className={clsx('flex-1 border-l-2 border-[#919191] bg-[#363636] pr-1.5 text-right text-[34px] leading-8 font-medium text-[#7b7b7b]', DARK_GRID)}>
              1/1
            </div>
            <div className="ml-1 flex w-[302px] items-start gap-2.5 bg-white p-1 text-[#2a2a2a]">
              <button type="button" aria-label="Fold Main">
                <TrackIcon kind="track" />
              </button>
              <span className="text-[19px] leading-7 font-semibold">Main</span>
            </div>
            <Meter />
          </div>
          {/* Loop end marker, over all lanes */}
          <div className="pointer-events-none absolute top-11 right-[352px] bottom-0 left-0.5">
            <div className="absolute inset-y-0 w-0.5 bg-[#919191]" style={{ left: pct(119.94) }}>
              <svg className="absolute top-[34px] left-0.5 h-2 w-1.5" viewBox="0 0 6 8" fill="#b8dce8">
                <path d="M0 0h6L0 8z" />
              </svg>
              <svg className="absolute top-full left-0 mt-0.5 h-2 w-2" viewBox="0 0 8 8" fill="#b8dce8">
                <path d="M0 0l8 8H0z" />
              </svg>
            </div>
          </div>
        </div>
        <Footer />
      </main>
    </div>
  );
}
